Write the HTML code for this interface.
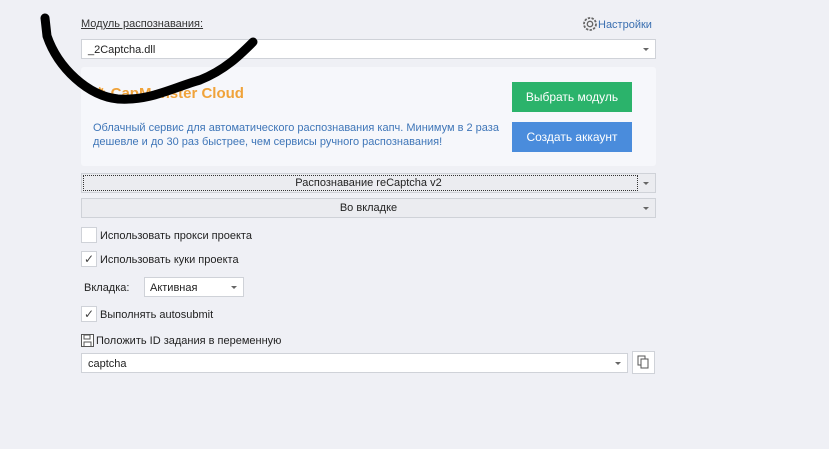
<!DOCTYPE html>
<html><head><meta charset="utf-8"><style>
*{box-sizing:border-box;margin:0;padding:0}
body{width:829px;height:449px;background:#eff0f5;font-family:"Liberation Sans","DejaVu Sans",sans-serif;font-size:11px;color:#222;position:relative;overflow:hidden}
.a{position:absolute}
.box{background:#fff;border:1px solid #cfd2d8}
.arr{position:absolute;right:6px;top:8px;width:0;height:0;border-left:3px solid transparent;border-right:3px solid transparent;border-top:3px solid #666}
.cb{position:absolute;width:16px;height:16px;background:#fff;border:1px solid #cfd2d8;font-size:12px;line-height:14px;text-align:center;color:#444}
</style></head><body>
<div class="a" style="left:81px;top:18px;text-decoration:underline;color:#333">Модуль распознавания:</div>
<div class="a" style="left:582px;top:16px;color:#3a6fb0">
<svg width="16" height="16" viewBox="0 0 16 16" style="vertical-align:-4px"><circle cx="8" cy="8" r="6" fill="none" stroke="#666" stroke-width="1.8" stroke-dasharray="2.4 1.3"/><circle cx="8" cy="8" r="2.7" fill="none" stroke="#666" stroke-width="1.4"/></svg>Настройки</div>
<div class="a box" style="left:81px;top:39px;width:575px;height:20px;padding:4px 6px">_2Captcha.dll<div class="arr"></div></div>
<div class="a" style="left:81px;top:67px;width:575px;height:99px;background:#f6f7fb;border-radius:3px"></div>
<div class="a" style="left:93px;top:84px;color:#f0a33a;font-size:15px;font-weight:bold">⚙ CapMonster Cloud</div>
<div class="a" style="left:93px;top:121px;color:#3f76b8;line-height:14px;font-size:11px">Облачный сервис для автоматического распознавания капч. Минимум в 2 раза<br>дешевле и до 30 раз быстрее, чем сервисы ручного распознавания!</div>
<div class="a" style="left:512px;top:82px;width:120px;height:30px;background:#2bb36b;color:#fff;font-size:12px;text-align:center;line-height:30px">Выбрать модуль</div>
<div class="a" style="left:512px;top:122px;width:120px;height:30px;background:#4a8cdc;color:#fff;font-size:12px;text-align:center;line-height:30px">Создать аккаунт</div>
<div class="a" style="left:81px;top:173px;width:575px;height:20px;background:#ebecf0;border:1px solid #cfd2d8;text-align:center;line-height:19px"><div class="a" style="left:1px;top:1px;width:555px;height:16px;border:1px dotted #333"></div>Распознавание reCaptcha v2<div class="arr"></div></div>
<div class="a" style="left:81px;top:198px;width:575px;height:20px;background:#ebecf0;border:1px solid #cfd2d8;text-align:center;line-height:19px">Во вкладке<div class="arr"></div></div>
<div class="cb" style="left:81px;top:227px"></div><div class="a" style="left:100px;top:230px">Использовать прокси проекта</div>
<div class="cb" style="left:81px;top:251px">✓</div><div class="a" style="left:100px;top:254px">Использовать куки проекта</div>
<div class="a" style="left:84px;top:282px">Вкладка:</div>
<div class="a box" style="left:144px;top:277px;width:100px;height:20px;padding:4px 5px">Активная<div class="arr"></div></div>
<div class="cb" style="left:81px;top:306px">✓</div><div class="a" style="left:100px;top:309px">Выполнять autosubmit</div>
<svg class="a" style="left:81px;top:334px" width="13" height="13" viewBox="0 0 13 13"><rect x="0.5" y="0.5" width="12" height="12" fill="#fff" stroke="#555"/><rect x="3" y="1" width="6" height="4" fill="none" stroke="#555"/><rect x="3" y="8" width="7" height="4.5" fill="none" stroke="#555"/></svg>
<div class="a" style="left:96px;top:335px">Положить ID задания в переменную</div>
<div class="a box" style="left:81px;top:353px;width:547px;height:20px;padding:4px 6px">captcha<div class="arr"></div></div>
<div class="a box" style="left:632px;top:351px;width:23px;height:23px"><svg width="21" height="21" viewBox="0 0 21 21"><rect x="5" y="4" width="7" height="9" fill="#fff" stroke="#555"/><rect x="8" y="7" width="7" height="9" fill="#fff" stroke="#555"/></svg></div>
<svg class="a" style="left:0;top:0" width="829" height="449"><path d="M45 18 L47 36 C58 68 88 96 118 99 C150 101 172 88 200 80 C225 70 240 55 253 42" fill="none" stroke="#000" stroke-width="9" stroke-linecap="round" stroke-linejoin="round"/></svg>
</body></html>
